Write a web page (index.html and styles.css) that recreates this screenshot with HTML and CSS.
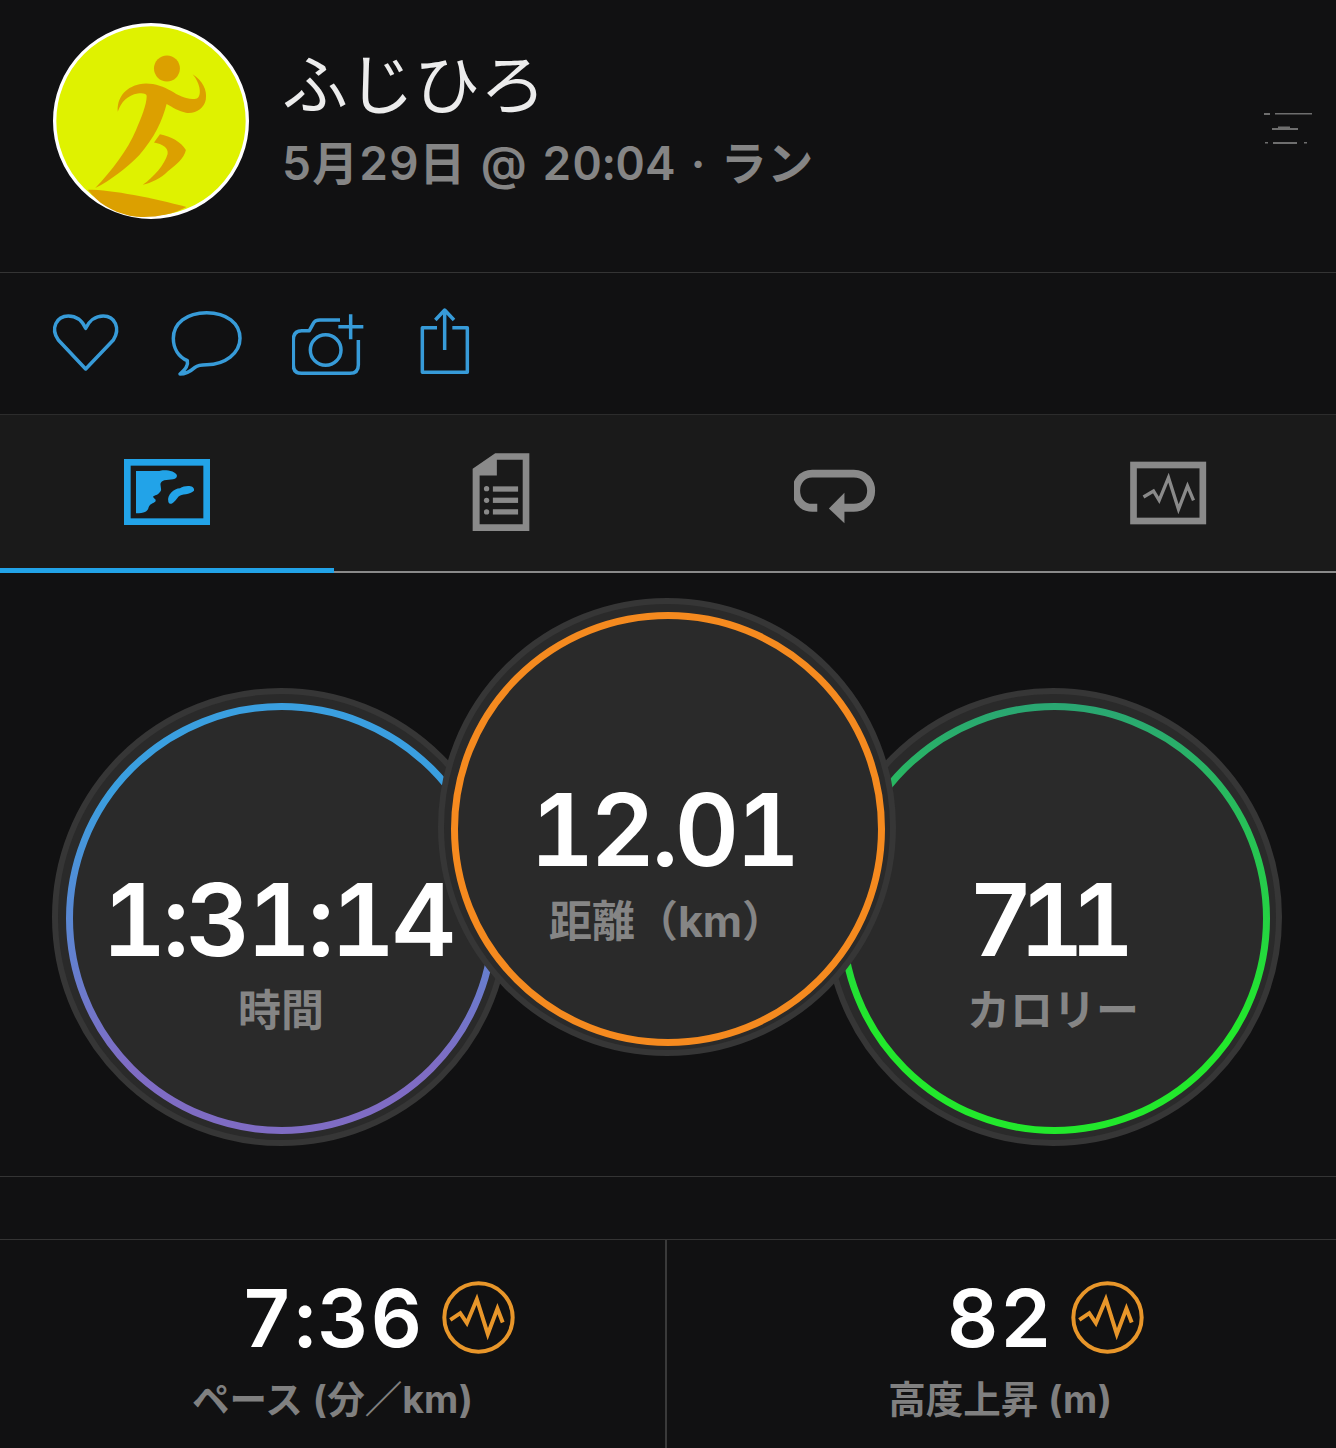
FILE: index.html
```html
<!DOCTYPE html>
<html lang="ja">
<head>
<meta charset="utf-8">
<title>ふじひろ</title>
<link rel="stylesheet" href="styles.css">
</head>
<body>
<div class="page">
  <header class="head">
    <svg class="avatar" viewBox="70 38 590 590">
      <circle cx="365" cy="333" r="290" fill="#dff200" stroke="#fff" stroke-width="10"/>
      <circle cx="413" cy="175" r="39" fill="#dca000"/>
      <path fill="#dca000" d="M265 305C262 265 285 232 330 222C365 215 400 228 425 242C450 258 480 272 503 265C518 258 515 220 490 192C520 210 535 240 530 268C525 295 500 312 470 308C450 305 430 292 412 282C400 330 375 385 330 435C290 475 245 510 197 535C245 485 295 420 320 360C335 325 352 285 352 258C352 250 340 248 325 250C295 255 275 275 265 305Z"/>
      <path fill="#dca000" d="M392 373C425 380 455 395 470 420C465 445 440 465 415 485C395 505 365 520 340 525C375 500 405 465 415 432C418 415 400 402 374 398Z"/>
      <path fill="#dca000" d="M175 540C250 540 370 565 472 592C420 620 350 628 300 618C245 605 205 580 175 540Z"/>
    </svg>
    <div class="who">
      <div class="name">ふじひろ</div>
      <div class="meta">5月29日 @ 20:04 · ラン</div>
    </div>
    <svg class="menu" viewBox="0 0 48 36">
      <rect x="0" y="3" width="6" height="2"/>
      <rect x="11" y="3" width="37" height="1.5"/>
      <rect x="8" y="18" width="26" height="2"/>
      <rect x="14" y="16.5" width="12" height="1.5"/>
      <rect x="1" y="32" width="3" height="1.5"/>
      <rect x="9" y="32" width="24" height="2"/>
      <rect x="40" y="32" width="3" height="1.5"/>
    </svg>
  </header>

  <section class="actions">
    <svg class="act act-heart" viewBox="60 30 216 270"><path d="M167 237L85 150C60 115 80 78 115 78C140 78 158 95 167 115C176 95 195 78 220 78C255 78 272 115 250 150Z"/></svg>
    <svg class="act act-bubble" viewBox="420 30 222 270"><path d="M530 68C590 68 630 100 630 145C630 190 585 224 530 224C515 224 505 224 495 232C480 245 465 252 450 252C465 240 475 225 472 212C445 200 430 175 430 145C430 100 470 68 530 68Z"/></svg>
    <svg class="act act-camera" viewBox="786 30 225 270"><path d="M985 150V225Q985 250 960 250H815Q790 250 790 225V150Q790 122 815 122H838L850 100Q855 90 870 90H930"/><circle cx="887" cy="180" r="46"/><path d="M925 110H1000M962 73V148"/></svg>
    <svg class="act act-share" viewBox="1156 30 180 270"><path d="M1222 113H1178V247H1313V113H1268M1245 180V60M1217 90L1245 60L1273 90"/></svg>
  </section>

  <nav class="tabs">
    <div class="tab tab-on">
      <svg class="tab-map" viewBox="72 57 258 198">
        <rect x="82" y="67" width="238" height="178" fill="none" stroke="#22a3e8" stroke-width="20"/>
        <path fill="#22a3e8" d="M108 93H178C190 88 230 92 231 108C228 124 200 116 188 123C172 132 192 148 178 158C168 170 150 164 166 178C172 190 150 188 146 202C143 214 135 220 108 220Z"/>
        <path fill="#22a3e8" d="M205 185C200 165 222 145 240 145C255 135 285 135 282 152C270 165 245 160 235 170C225 185 210 200 205 185Z"/>
      </svg>
    </div>
    <div class="tab">
      <svg class="tab-doc" viewBox="1115 35 175 240">
        <path fill="#8a8a8a" fill-rule="evenodd" d="M1185 38H1288V273H1117V85ZM1190 58V105H1138V252H1268V58Z"/>
        <rect class="gray" x="1178" y="138" width="76" height="16"/>
        <rect class="gray" x="1178" y="172" width="76" height="16"/>
        <rect class="gray" x="1178" y="207" width="76" height="16"/>
        <circle class="gray" cx="1159" cy="145" r="8"/>
        <circle class="gray" cx="1159" cy="180" r="8"/>
        <circle class="gray" cx="1159" cy="215" r="8"/>
      </svg>
    </div>
    <div class="tab">
      <svg class="tab-loop" viewBox="40 85 250 175">
        <path fill="none" stroke="#8a8a8a" stroke-width="24" d="M110 205H95C30 205 30 102 95 102H220C290 102 290 205 220 205H180"/>
        <path class="gray" d="M145 207L192 160V252Z"/>
      </svg>
    </div>
    <div class="tab">
      <svg class="tab-chart" viewBox="1050 60 230 192">
        <rect x="1060" y="72" width="208" height="168" fill="none" stroke="#8a8a8a" stroke-width="20"/>
        <path fill="none" stroke="#8a8a8a" stroke-width="10" d="M1090 168L1120 150L1137 178L1165 110L1195 205L1222 135L1240 178"/>
      </svg>
    </div>
  </nav>

  <section class="rings">
    <svg width="0" height="0" class="defs">
      <defs>
        <linearGradient id="g-blue" x1="0" y1="0" x2="0" y2="1"><stop offset="0.2" stop-color="#3a9fe0"/><stop offset="0.85" stop-color="#7f6cc4"/></linearGradient>
        <linearGradient id="g-green" x1="0" y1="0" x2="0" y2="1"><stop offset="0" stop-color="#2aa772"/><stop offset="0.75" stop-color="#22e82c"/></linearGradient>
      </defs>
    </svg>
    <div class="ring ring-side">
      <svg class="ring-art" viewBox="0 0 458 458"><circle class="disc" cx="229" cy="229" r="226"/><circle class="arc arc-blue" cx="229.5" cy="230.5" r="212"/></svg>
      <div class="ring-text"><div class="big">1:31:14</div><div class="cap">時間</div></div>
    </div>
    <div class="ring ring-mid">
      <svg class="ring-art" viewBox="0 0 458 458"><circle class="disc" cx="229" cy="229" r="226"/><circle class="arc arc-orange" cx="230" cy="231" r="213.5"/></svg>
      <div class="ring-text"><div class="big">12.01</div><div class="cap cap-mid">距離（km）</div></div>
    </div>
    <div class="ring ring-side ring-right">
      <svg class="ring-art" viewBox="0 0 458 458"><circle class="disc" cx="229" cy="229" r="226"/><circle class="arc arc-green" cx="230.5" cy="230.5" r="212"/></svg>
      <div class="ring-text"><div class="big big-tight">711</div><div class="cap">カロリー</div></div>
    </div>
  </section>

  <div class="spacer"></div>

  <section class="stats">
    <div class="stat">
      <div class="stat-val">7:36
        <svg class="pulse" viewBox="65 35 220 220"><circle cx="175" cy="145" r="103"/><path d="M90 152L120 132L140 162L170 90L203 195L232 118L248 160"/></svg>
      </div>
      <div class="stat-cap">ペース (分／km)</div>
    </div>
    <div class="stat stat-right">
      <div class="stat-val">82
        <svg class="pulse" viewBox="65 35 220 220"><circle cx="175" cy="145" r="103"/><path d="M90 152L120 132L140 162L170 90L203 195L232 118L248 160"/></svg>
      </div>
      <div class="stat-cap">高度上昇 (m)</div>
    </div>
  </section>
</div>
</body>
</html>
```
FILE: styles.css
```css
* { box-sizing: border-box; }
html, body { margin: 0; padding: 0; background: #111112; }
body { font-family: Inter, "Noto Sans CJK JP", sans-serif; color: #fff; font-variant-numeric: tabular-nums; }
.page { width: 1336px; height: 1448px; overflow: hidden; }

.head { height: 273px; border-bottom: 1px solid #343434; display: flex; align-items: flex-start; padding: 23px 24px 0 53px; }
.avatar { width: 196px; height: 196px; flex: none; }
.who { margin-left: 33px; }
.name { font-family: "Noto Sans CJK JP", sans-serif; font-weight: 400; font-size: 66px; line-height: 76px; margin-top: 19px; color: #ececec; }
.meta { font-weight: 600; font-size: 46px; line-height: 56px; margin-top: 17px; color: #858585; white-space: nowrap; letter-spacing: 0.5px; word-spacing: 2px; }
.menu { margin-left: auto; margin-top: 87px; width: 48px; height: 36px; fill: #6e6e6e; flex: none; }

.actions { height: 142px; border-bottom: 1px solid #2c2c2c; display: flex; gap: 48px; padding: 27px 0 0 50px; }
.act { height: 90px; flex: none; }
.act path, .act circle { fill: none; stroke: #379bd8; stroke-width: 10.5; stroke-linejoin: round; }
.act-heart { width: 72px; }
.act-bubble { width: 74px; }
.act-camera { width: 75px; }
.act-share { width: 60px; }

.tabs { height: 158px; background: #1a1a1a; display: grid; grid-template-columns: repeat(4, 1fr); border-bottom: 2px solid #8a8a8a; }
.tab { display: flex; align-items: center; justify-content: center; }
.tab-on { margin-bottom: -2px; border-bottom: 5px solid #22a3e8; }
.gray { fill: #8a8a8a; }
.tab-map { width: 86px; height: 66px; }
.tab-doc { width: 58px; height: 80px; margin-bottom: 2px; }
.tab-loop { width: 83px; height: 58px; margin-top: 8px; }
.tab-chart { width: 77px; height: 64px; margin: 0 2px 1px 0; }

.rings { height: 604px; border-bottom: 1px solid #343434; display: flex; align-items: flex-start; padding-left: 52px; background: #111112; }
.defs { position: absolute; }
.ring { width: 458px; height: 458px; flex: none; position: relative; text-align: center; }
.ring-side { margin-top: 115px; }
.ring-mid { margin: 25px -72px 0 -72px; z-index: 2; }
.ring-art { position: absolute; inset: 0; width: 458px; height: 458px; }
.disc { fill: #2a2a2a; stroke: #363636; stroke-width: 6; }
.arc { fill: none; stroke-width: 7; }
.arc-blue { stroke: url(#g-blue); }
.arc-orange { stroke: #f58a1f; }
.arc-green { stroke: url(#g-green); }
.ring-text { position: relative; padding-top: 167px; }
.big { font-weight: 600; font-size: 100px; line-height: 130px; letter-spacing: -3.8px; padding-right: 8px; }
.big-tight { letter-spacing: -14px; padding-right: 17px; }
.cap { font-weight: 700; font-size: 43px; line-height: 50px; margin-top: 0; color: #858585; }
.cap-mid { margin-top: 1px; }

.spacer { height: 63px; border-bottom: 1px solid #343434; }
.stats { display: grid; grid-template-columns: 667px 669px; height: 210px; }
.stat { text-align: center; padding-top: 35px; border-right: 2px solid #3a3a3a; }
.stat-right { border-right: 0; padding-right: 3px; }
.stat-val { position: relative; display: inline-block; font-weight: 600; font-size: 80px; line-height: 86px; letter-spacing: 1.5px; }
.pulse { position: absolute; left: calc(100% + 18px); top: 6px; width: 73px; height: 73px; }
.pulse circle, .pulse path { fill: none; stroke: #e8962a; stroke-width: 12; }
.stat-cap { font-weight: 700; font-size: 37.5px; line-height: 44px; margin-top: 17px; color: #808080; }
```
